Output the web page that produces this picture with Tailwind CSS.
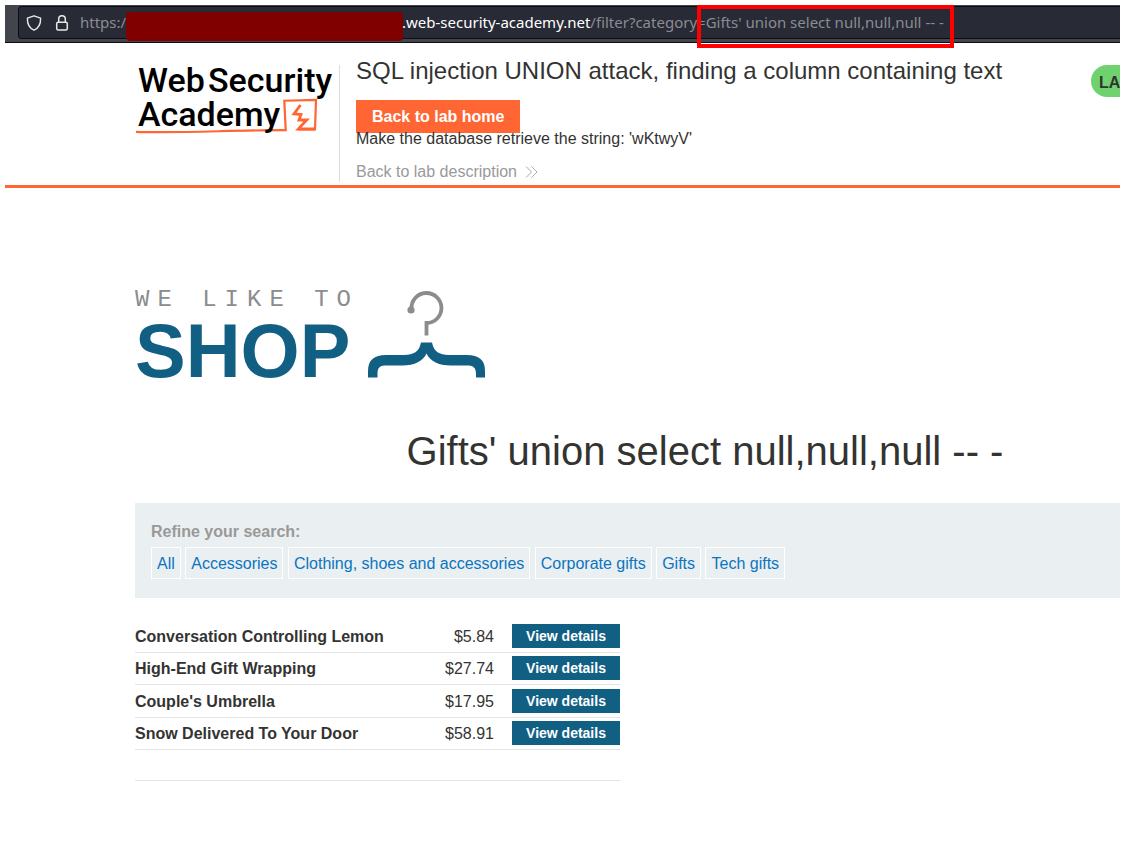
<!DOCTYPE html>
<html lang="en">
<head>
<meta charset="utf-8">
<meta name="viewport" content="width=device-width, initial-scale=1">
<title>SQL injection UNION attack, finding a column containing text</title>
<script src="https://cdn.jsdelivr.net/npm/@tailwindcss/browser@4"></script>
</head>
<body class="bg-white p-[5px] font-['Liberation_Sans',Arial,sans-serif] text-base text-[#333332]">
<div class="border-b border-[#0c0c12] bg-[#42454c] pl-[13px] pt-px pb-[3px]">
  <div class="flex h-[33px] items-center rounded-l border border-r-0 border-[#0c0c12] bg-[#282a36] pl-[7px] font-['Noto_Sans',sans-serif] text-[15px] text-[#8b8c91] whitespace-nowrap">
    <svg class="size-4 shrink-0" viewBox="0 0 16 16" fill="none" stroke="#e8e8ea" stroke-width="1.4" stroke-linejoin="round" aria-hidden="true"><path d="M8 .8 14.6 3.2C14.8 8.500 13.200 12.800 8 15.200 2.800 12.800 1.200 8.500 1.400 3.200Z"/></svg>
    <svg class="ml-3 size-4 shrink-0" viewBox="0 0 16 16" fill="none" stroke="#e8e8ea" stroke-width="1.5" aria-hidden="true"><rect x="2.700" y="7.300" width="10.600" height="7.700" rx="1.500"/><path d="M4.700 7V4a3.300 3.300 0 0 1 6.600 0v3"/></svg>
    <span class="ml-[10px] w-[46px] shrink-0">https:/</span>
    <span class="mt-2 h-[29px] w-[277px] shrink-0 rounded-[4px] bg-[#800000]"></span>
    <span class="-ml-px text-white">.web-security-academy.net</span><span>/filter?category=</span><span class="relative">Gifts' union select null,null,null -- -<span class="absolute -top-[6px] -left-[9px] -right-[10px] h-[43px] border-4 border-[#ff0000]"></span></span>
  </div>
</div>

<header class="flex items-start border-b-3 border-[#ff6633] pl-[130px] overflow-hidden">
  <a href="#" aria-label="Web Security Academy" class="mt-[22px] h-[117px] w-[205px] shrink-0 border-r border-[#dddddd]">
    <svg class="h-[74px] w-[202px] overflow-visible" viewBox="0 0 202 74" font-family="Roboto, sans-serif" font-size="34" font-weight="500" fill="#000">
      <g fill="none" stroke="#ff6633">
        <path d="M1 66.800C40 68.500 100 65 150.700 65.200L149.300 35.700 181 35 180 64.300H163.300" stroke-width="2.200"/>
        <path d="M165.500 40 159 48.800 166 49.500 164 55H171.700L163.300 64H180" stroke-width="2.800"/>
      </g>
      <text x="3" y="27">Web</text>
      <text x="73" y="27">Security</text>
      <text x="3" y="61">Academy</text>
    </svg>
  </a>
  <div class="flex min-w-0 flex-1 flex-col items-start pl-4 pt-[13px]">
    <h2 class="text-2xl leading-[30px] whitespace-nowrap">SQL injection UNION attack, finding a column containing text</h2>
    <a href="#" class="mt-[14px] h-[33px] bg-[#ff6633] px-4 font-bold leading-[33px] text-white">Back to lab home</a>
    <p class="-mt-1 leading-5">Make the database retrieve the string: 'wKtwyV'</p>
    <a href="#" class="mt-[13px] mb-[3px] flex items-center gap-2 leading-5 text-[#999999]">Back to lab description
      <svg class="h-3 w-[13px]" viewBox="0 0 13 12" fill="none" stroke="#aaa" aria-hidden="true"><path d="M1 .5 6.500 6 1 11.500M6.500 .5 12 6 6.500 11.500"/></svg>
    </a>
  </div>
  <span class="mt-[22px] h-8 w-[29px] shrink-0 rounded-l-2xl bg-[#70d26f] pl-2 font-bold leading-9">LA</span>
</header>

<main class="pl-[130px]">
  <div class="mt-[102px] flex h-[90px] gap-[17px]">
    <div class="w-[216px]">
      <p class="h-[25px] text-2xl leading-[20px] tracking-[8px] whitespace-nowrap text-[#8b8c8e] font-['Liberation_Mono',monospace]">WE LIKE TO</p>
      <p class="text-[76px] font-bold leading-[71px] text-[#125f84]">SHOP</p>
    </div>
    <svg class="h-[90px] w-[117px] shrink-0" viewBox="0 0 117 90" fill="none" aria-hidden="true">
      <path d="M43.500 19A15 15 0 1 1 58.500 33V45.500" stroke="#8b8c8e" stroke-width="3.800"/>
      <circle cx="43" cy="20" r="3.600" fill="#8b8c8e"/>
      <path d="M53 52.500H64C66 62 71 64.500 81 65H99C111 65 117 70 117 81V87.500H108V84C108 77 105 75.500 98 75.500H83C70 75.500 62 71 58.500 63.500 55 71 47 75.500 34 75.500H19C12 75.500 9.500 77 9.500 84V87.500H0V81C0 70 6 65 18 65H36C46 64.500 51 62 53 52.500Z" fill="#125f84"/>
    </svg>
  </div>

  <h1 class="mt-[46px] pl-[155px] text-center text-[40px] leading-[50px] whitespace-nowrap">Gifts' union select null,null,null -- -</h1>

  <section class="mt-[27px] h-[95px] bg-[#eaeff2] px-4 pt-[19px]">
    <p class="font-bold leading-5 text-[#999999]">Refine your search:</p>
    <nav class="mt-[5px] whitespace-nowrap text-[#0b75bf]">
      <a href="#" class="inline-block h-8 border border-white px-[5px] leading-8">All</a>
      <a href="#" class="inline-block h-8 border border-white px-[5px] leading-8">Accessories</a>
      <a href="#" class="inline-block h-8 border border-white px-[5px] leading-8">Clothing, shoes and accessories</a>
      <a href="#" class="inline-block h-8 border border-white px-[5px] leading-8">Corporate gifts</a>
      <a href="#" class="inline-block h-8 border border-white px-[5px] leading-8">Gifts</a>
      <a href="#" class="inline-block h-8 border border-white px-[5px] leading-8">Tech gifts</a>
    </nav>
  </section>

  <table class="mt-[22px] w-[485px] border-collapse">
    <tbody>
      <tr class="h-8 border-b border-[#e4e4e4]"><th scope="row" class="p-0 pt-[2px] text-left font-bold">Conversation Controlling Lemon</th><td class="p-0 pt-[2px] pr-[18px] text-right">$5.84</td><td class="w-[108px] p-0"><a href="#" class="block h-6 bg-[#125f84] text-center text-sm font-bold leading-6 text-white">View details</a></td></tr>
      <tr class="h-8 border-b border-[#e4e4e4]"><th scope="row" class="p-0 pt-[2px] text-left font-bold">High-End Gift Wrapping</th><td class="p-0 pt-[2px] pr-[18px] text-right">$27.74</td><td class="p-0"><a href="#" class="block h-6 bg-[#125f84] text-center text-sm font-bold leading-6 text-white">View details</a></td></tr>
      <tr class="h-[33px] border-b border-[#e4e4e4]"><th scope="row" class="p-0 pt-[2px] text-left font-bold">Couple's Umbrella</th><td class="p-0 pt-[2px] pr-[18px] text-right">$17.95</td><td class="p-0"><a href="#" class="block h-6 bg-[#125f84] text-center text-sm font-bold leading-6 text-white">View details</a></td></tr>
      <tr class="h-8 border-b border-[#e4e4e4]"><th scope="row" class="p-0 pt-[2px] text-left font-bold">Snow Delivered To Your Door</th><td class="p-0 pt-[2px] pr-[18px] text-right">$58.91</td><td class="p-0"><a href="#" class="block h-6 bg-[#125f84] text-center text-sm font-bold leading-6 text-white">View details</a></td></tr>
      <tr class="h-[31px] border-b border-[#e4e4e4]"><td colspan="3" class="p-0"></td></tr>
    </tbody>
  </table>
</main>
</body>
</html>
